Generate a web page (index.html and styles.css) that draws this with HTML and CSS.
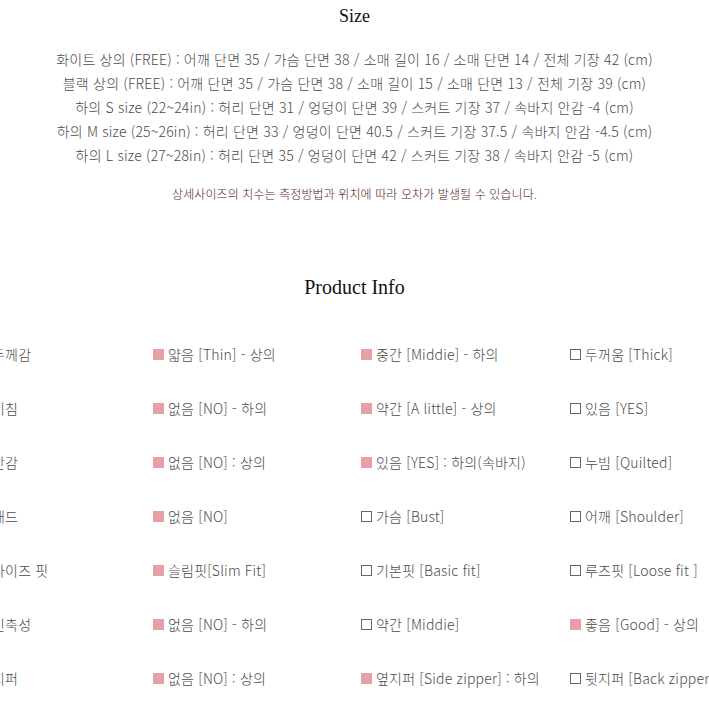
FILE: index.html
```html
<!DOCTYPE html>
<html lang="ko">
<head>
<meta charset="utf-8">
<title>Size / Product Info</title>
<link rel="stylesheet" href="styles.css">
</head>
<body>
<section class="size">
  <h2 class="heading">Size</h2>
  <ul class="size-list">
    <li>화이트 상의 (FREE) : 어깨 단면 35 / 가슴 단면 38 / 소매 길이 16 / 소매 단면 14 / 전체 기장 42 (cm)</li>
    <li>블랙 상의 (FREE) : 어깨 단면 35 / 가슴 단면 38 / 소매 길이 15 / 소매 단면 13 / 전체 기장 39 (cm)</li>
    <li>하의 S size (22~24in) : 허리 단면 31 / 엉덩이 단면 39 / 스커트 기장 37 / 속바지 안감 -4 (cm)</li>
    <li>하의 M size (25~26in) : 허리 단면 33 / 엉덩이 단면 40.5 / 스커트 기장 37.5 / 속바지 안감 -4.5 (cm)</li>
    <li>하의 L size (27~28in) : 허리 단면 35 / 엉덩이 단면 42 / 스커트 기장 38 / 속바지 안감 -5 (cm)</li>
  </ul>
  <p class="notice">상세사이즈의 치수는 측정방법과 위치에 따라 오차가 발생될 수 있습니다.</p>
</section>
<section class="info">
  <h2 class="heading heading-info">Product Info</h2>
  <div class="info-grid">
    <div class="label">두께감</div>
    <div class="opt"><span class="box on"></span>얇음 [Thin] - 상의</div>
    <div class="opt"><span class="box on"></span>중간 [Middie] - 하의</div>
    <div class="opt"><span class="box"></span>두꺼움 [Thick]</div>

    <div class="label">비침</div>
    <div class="opt"><span class="box on"></span>없음 [NO] - 하의</div>
    <div class="opt"><span class="box on"></span>약간 [A little] - 상의</div>
    <div class="opt"><span class="box"></span>있음 [YES]</div>

    <div class="label">안감</div>
    <div class="opt"><span class="box on"></span>없음 [NO] : 상의</div>
    <div class="opt"><span class="box on"></span>있음 [YES] : 하의(속바지)</div>
    <div class="opt"><span class="box"></span>누빔 [Quilted]</div>

    <div class="label">패드</div>
    <div class="opt"><span class="box on"></span>없음 [NO]</div>
    <div class="opt"><span class="box"></span>가슴 [Bust]</div>
    <div class="opt"><span class="box"></span>어깨 [Shoulder]</div>

    <div class="label">사이즈 핏</div>
    <div class="opt"><span class="box on"></span>슬림핏[Slim Fit]</div>
    <div class="opt"><span class="box"></span>기본핏 [Basic fit]</div>
    <div class="opt"><span class="box"></span>루즈핏 [Loose fit ]</div>

    <div class="label">신축성</div>
    <div class="opt"><span class="box on"></span>없음 [NO] - 하의</div>
    <div class="opt"><span class="box"></span>약간 [Middie]</div>
    <div class="opt"><span class="box on"></span>좋음 [Good] - 상의</div>

    <div class="label">지퍼</div>
    <div class="opt"><span class="box on"></span>없음 [NO] : 상의</div>
    <div class="opt"><span class="box on"></span>옆지퍼 [Side zipper] : 하의</div>
    <div class="opt"><span class="box"></span>뒷지퍼 [Back zipper]</div>
  </div>
</section>
</body>
</html>
```

FILE: styles.css
```css
html, body {
  margin: 0;
  padding: 0;
  overflow: hidden;
  background: #fff;
}
body {
  font-family: "Noto Sans CJK KR", "Noto Sans", sans-serif;
  font-weight: 300;
  color: #4a4a4a;
  width: 709px;
}
.heading {
  margin: 0;
  font-family: "Liberation Serif", serif;
  font-weight: 400;
  font-size: 18px;
  line-height: 32px;
  color: #111;
  text-align: center;
}
.heading-info {
  font-size: 20px;
  margin-top: 67px;
}
.size-list {
  list-style: none;
  margin: 15px 0 0;
  padding: 0;
  text-align: center;
  font-size: 14px;
  line-height: 24px;
  letter-spacing: 0.2px;
  white-space: nowrap;
}
.notice {
  margin: 17px 0 0;
  text-align: center;
  font-size: 12px;
  line-height: 20px;
  letter-spacing: 0.1px;
  color: #551818;
}
.info-grid {
  display: grid;
  grid-template-columns: 161px 208px 209px 220px;
  grid-auto-rows: 54px;
  margin: 24px 0 0 -8px;
  font-size: 14px;
  letter-spacing: 0.2px;
  white-space: nowrap;
}
.label, .opt {
  display: flex;
  align-items: center;
}
.box {
  width: 9px;
  height: 9px;
  border: 1.5px solid #666;
  margin-right: 4px;
  flex: none;
}
.box.on {
  width: 11px;
  height: 11px;
  border: 0;
  background: #e8a0a8;
}
```
